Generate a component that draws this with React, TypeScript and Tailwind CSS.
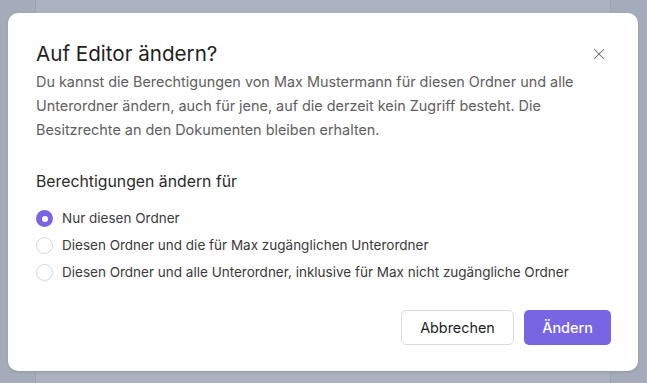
import React, { useState } from 'react'
import { X } from 'lucide-react'

const options = [
  'Nur diesen Ordner',
  'Diesen Ordner und die für Max zugänglichen Unterordner',
  'Diesen Ordner und alle Unterordner, inklusive für Max nicht zugängliche Ordner',
]

export default function App() {
  const [selected, setSelected] = useState(0)

  return (
    <div
      className="relative h-[383px] w-[647px] overflow-hidden bg-[#a4abbb]"
      style={{ fontFamily: 'Inter, "Noto Sans", sans-serif' }}
    >
      {/* page behind the overlay */}
      <div className="absolute left-[35px] right-[36px] top-0 bottom-0 border-x border-[#9ba2b3] bg-[#aab1c1]" />

      <div className="absolute left-[8px] top-[13px] w-[630px] rounded-[10px] bg-white pl-[28px] pr-[27px] pt-[27px] pb-[26px] shadow-sm">
        <div className="flex items-center justify-between">
          <h2 className="text-[20.6px] leading-[28px] text-[#1f1f1f]">Auf Editor ändern?</h2>
          <button className="mr-[3px] text-[#6b6b6b]">
            <X className="h-[18px] w-[18px]" strokeWidth={1.4} />
          </button>
        </div>

        <p className="mt-[2px] text-[14.4px] leading-[24px] text-[#606060]">
          Du kannst die Berechtigungen von Max Mustermann für diesen Ordner und alle Unterordner ändern, auch für jene, auf die derzeit kein Zugriff besteht. Die Besitzrechte an den Dokumenten bleiben erhalten.
        </p>

        <h3 className="mt-[28px] text-[15.8px] leading-[24px] text-[#2b2b2b]">Berechtigungen ändern für</h3>

        <div className="mt-[11px] flex flex-col">
          {options.map((label, i) => (
            <label
              key={i}
              onClick={() => setSelected(i)}
              className="flex h-[27px] cursor-pointer items-center gap-[9px] text-[13.5px] text-[#3a3a3a]"
            >
              {selected === i ? (
                <span className="flex h-[17px] w-[17px] shrink-0 items-center justify-center rounded-full bg-[#7765e3]">
                  <span className="h-[6px] w-[6px] rounded-full bg-white" />
                </span>
              ) : (
                <span className="h-[17px] w-[17px] shrink-0 rounded-full border border-[#d6d6d6] bg-white" />
              )}
              {label}
            </label>
          ))}
        </div>

        <div className="mt-[24px] flex justify-end gap-[10px]">
          <button className="h-[35px] w-[113px] rounded-[5px] border border-[#dcdcdc] bg-white text-[14.4px] text-[#1f1f1f]">
            Abbrechen
          </button>
          <button className="h-[35px] w-[87px] rounded-[5px] bg-[#7765e3] text-[14.4px] font-medium text-white">
            Ändern
          </button>
        </div>
      </div>
    </div>
  )
}
